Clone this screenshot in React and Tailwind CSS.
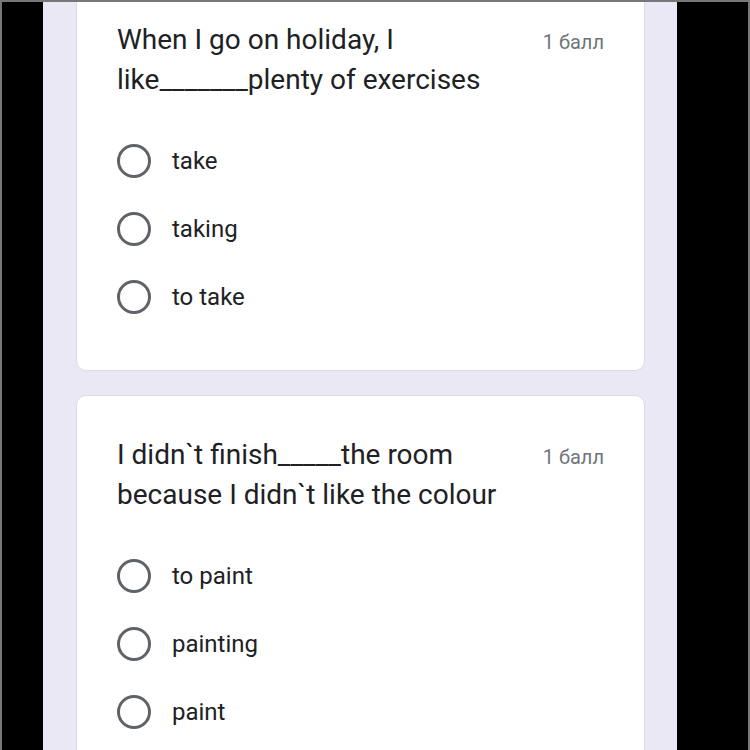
const QUESTIONS = [
  {
    title: 'When I go on holiday, I like_______plenty of exercises',
    points: '1 балл',
    options: ['take', 'taking', 'to take'],
  },
  {
    title: 'I didn`t finish_____the room because I didn`t like the colour',
    points: '1 балл',
    options: ['to paint', 'painting', 'paint'],
  },
]

function Radio() {
  return <div className="w-[34px] h-[34px] rounded-full border-[3px] border-[#5f6368] flex-shrink-0" />
}

function QuestionCard({ q }) {
  return (
    <div className="bg-white border border-[#dadce0] rounded-[10px] pl-[40px] pr-[40px] pt-[39px] pb-[39px]">
      <div className="flex items-start">
        <div className="w-[415px] text-[28px] leading-[40px] text-[#202124]">
          {q.title}
        </div>
        <div className="ml-auto mt-[2px] text-[20px] leading-[40px] text-[#70757a]">{q.points}</div>
      </div>
      <div className="mt-[27px] flex flex-col">
        {q.options.map((opt) => (
          <div key={opt} className="h-[68px] flex items-center">
            <Radio />
            <span className="ml-[21px] text-[24px] text-[#202124]">{opt}</span>
          </div>
        ))}
      </div>
    </div>
  )
}

export default function App() {
  return (
    <div
      className="w-[750px] h-[750px] overflow-hidden flex bg-[#777777] pt-[2px] pl-[2px] pr-[2px]"
      style={{ fontFamily: '"Roboto", "Liberation Sans", sans-serif' }}
    >
      <div className="w-[41px] bg-black flex-shrink-0" />
      <div className="w-[634px] bg-[#ebe8f5] flex-shrink-0 overflow-hidden pl-[33px] pr-[32px]">
        <div className="mt-[-22px] flex flex-col gap-[24px]">
          {QUESTIONS.map((q) => (
            <QuestionCard key={q.title} q={q} />
          ))}
        </div>
      </div>
      <div className="flex-1 bg-black" />
    </div>
  )
}
